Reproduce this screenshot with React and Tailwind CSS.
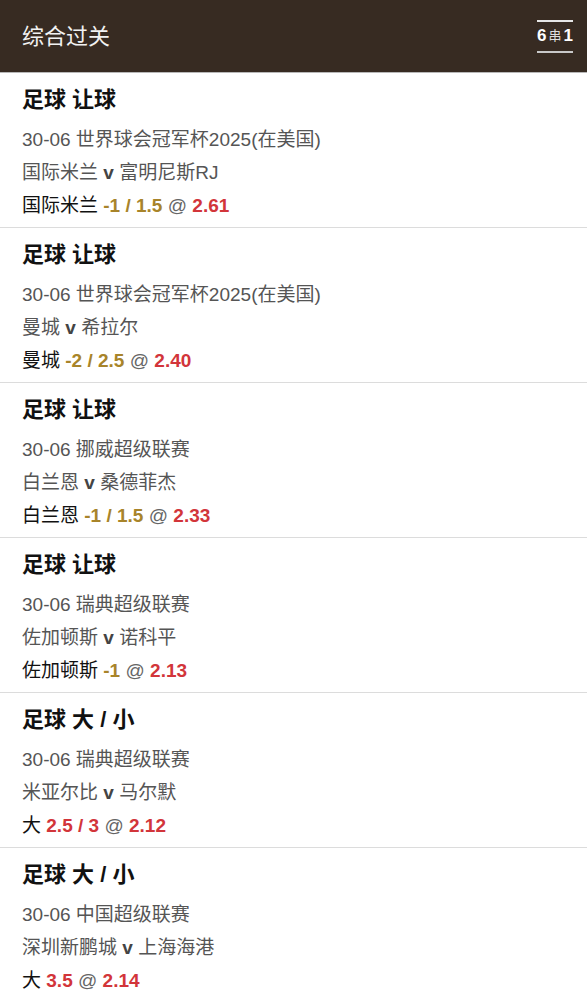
import React from 'react';

const bets = [
  { market: '足球 让球', league: '30-06 世界球会冠军杯2025(在美国)', home: '国际米兰', away: '富明尼斯RJ', pick: '国际米兰', line: '-1 / 1.5', lineColor: 'gold', odds: '2.61' },
  { market: '足球 让球', league: '30-06 世界球会冠军杯2025(在美国)', home: '曼城', away: '希拉尔', pick: '曼城', line: '-2 / 2.5', lineColor: 'gold', odds: '2.40' },
  { market: '足球 让球', league: '30-06 挪威超级联赛', home: '白兰恩', away: '桑德菲杰', pick: '白兰恩', line: '-1 / 1.5', lineColor: 'gold', odds: '2.33' },
  { market: '足球 让球', league: '30-06 瑞典超级联赛', home: '佐加顿斯', away: '诺科平', pick: '佐加顿斯', line: '-1', lineColor: 'gold', odds: '2.13' },
  { market: '足球 大 / 小', league: '30-06 瑞典超级联赛', home: '米亚尔比', away: '马尔默', pick: '大', line: '2.5 / 3', lineColor: 'red', odds: '2.12' },
  { market: '足球 大 / 小', league: '30-06 中国超级联赛', home: '深圳新鹏城', away: '上海海港', pick: '大', line: '3.5', lineColor: 'red', odds: '2.14' },
];

const font = { fontFamily: '"Liberation Sans", Arial, "Noto Sans CJK SC", sans-serif' };

function BetRow({ bet }) {
  return (
    <div className="px-[22px] pt-[12px] pb-[5px] border-b border-[#dcdcdc]">
      <div className="text-[22px] leading-[30px] font-bold text-[#111]">{bet.market}</div>
      <div className="mt-[8px] text-[19px] leading-[33px] text-[#555]">{bet.league}</div>
      <div className="text-[19px] leading-[33px] text-[#555]">
        {bet.home} <span className="font-bold text-[#444]">v</span> {bet.away}
      </div>
      <div className="text-[19px] leading-[33px] text-[#111]">
        {bet.pick}{' '}
        <span className={`font-bold ${bet.lineColor === 'gold' ? 'text-[#a8842a]' : 'text-[#d2353a]'}`}>{bet.line}</span>
        <span className="text-[#666]"> @ </span>
        <span className="font-bold text-[#d2353a]">{bet.odds}</span>
      </div>
    </div>
  );
}

export default function App() {
  return (
    <div className="w-[587px] min-h-[1000px] bg-white" style={font}>
      {/* header */}
      <div className="h-[73px] bg-[#372b22] border-b border-[#b8b8b8] flex items-center justify-between pl-[22px] pr-[14px]">
        <div className="text-[22px] text-[#f2f2f2]">综合过关</div>
        <div className="flex flex-col w-[36px]">
          <div className="h-[2px] bg-[#e6e6e6]" />
          <div className="flex items-center justify-between h-[29px] text-white">
            <span className="text-[17px] font-bold">6</span>
            <span className="text-[13px] text-[#ddd]">串</span>
            <span className="text-[17px] font-bold">1</span>
          </div>
          <div className="h-[2px] bg-[#c8c8c8]" />
        </div>
      </div>
      {bets.map((b, i) => (
        <BetRow key={i} bet={b} />
      ))}
    </div>
  );
}
